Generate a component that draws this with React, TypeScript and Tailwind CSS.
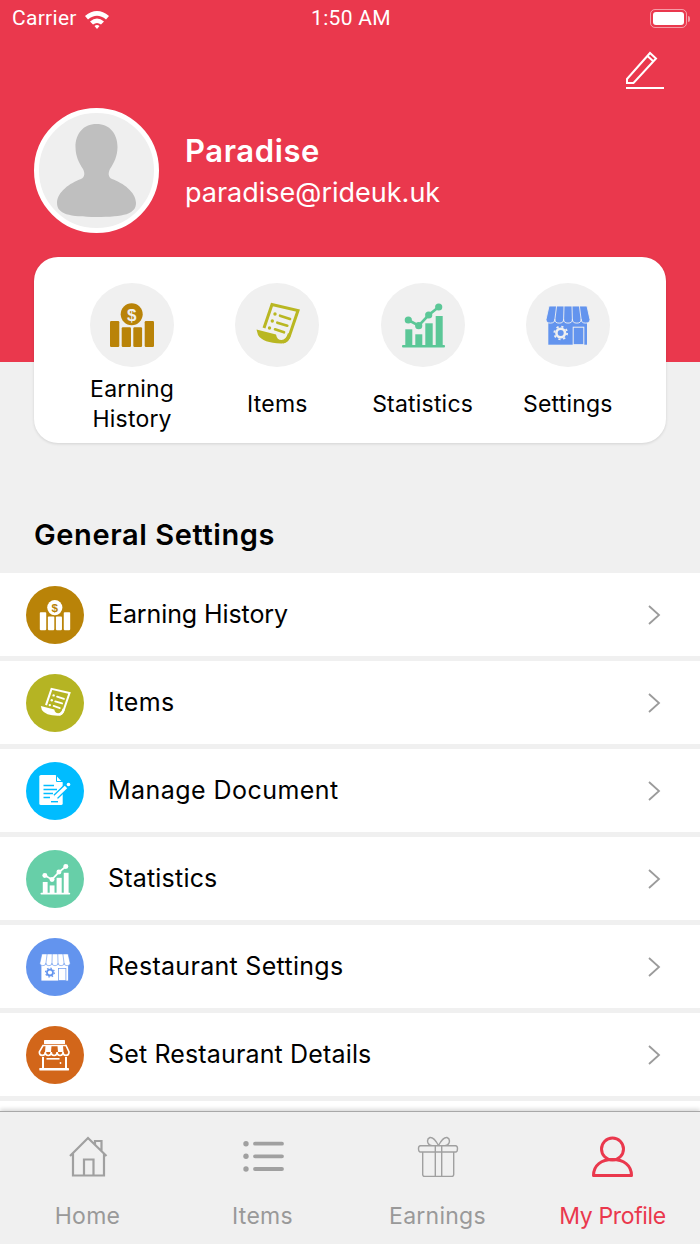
const FONT = "font-['Inter','Liberation_Sans',sans-serif]";

function EarningIcon({ fg, bg }: { fg: string; bg: string }) {
  return (
    <svg viewBox="0 0 84 84" className="w-full h-full">
      <rect x="20" y="38" width="9.3" height="26" rx="1.2" fill={fg} />
      <rect x="31.7" y="44.3" width="9.3" height="19.7" rx="1.2" fill={fg} />
      <rect x="43.3" y="44.3" width="8.8" height="19.7" rx="1.2" fill={fg} />
      <rect x="54.7" y="38" width="9.3" height="26" rx="1.2" fill={fg} />
      <circle cx="41.7" cy="31.3" r="11" fill={fg} />
      <text x="41.7" y="37.5" textAnchor="middle" fontSize="17" fontWeight="700" fontFamily="Liberation Sans, sans-serif" fill={bg}>
        $
      </text>
    </svg>
  );
}

function ItemsIcon({ fg }: { fg: string }) {
  return (
    <svg viewBox="0 0 84 84" className="w-full h-full">
      <path d="M29 45 L37 21.5 L63 27.5 L55 51 Q53 58 48 59" fill="none" stroke={fg} strokeWidth="3" />
      <path d="M21.5 46.5 L41 51.5 Q42 57 46.5 57 Q51 57 53 50 L56 52 Q53 61 46 60.5 Q28 60 23 52 Z" fill={fg} />
      <circle cx="40" cy="31" r="1.7" fill={fg} />
      <circle cx="37.3" cy="38" r="1.7" fill={fg} />
      <circle cx="34.5" cy="45" r="1.7" fill={fg} />
      <path d="M45 32.7 L55 36 M42.3 39.7 L52.3 42.7 M40 46.3 L49 49.3" stroke={fg} strokeWidth="2.6" strokeLinecap="round" />
    </svg>
  );
}

function StatsIcon({ fg }: { fg: string }) {
  return (
    <svg viewBox="0 0 84 84" className="w-full h-full">
      <rect x="21" y="62" width="43" height="2.4" rx="1" fill={fg} />
      <rect x="24.3" y="46.3" width="7" height="16" fill={fg} />
      <rect x="34.3" y="51.3" width="7" height="11" fill={fg} />
      <rect x="44.3" y="40.3" width="7.4" height="22" fill={fg} />
      <rect x="54.7" y="33" width="7" height="29.3" fill={fg} />
      <path d="M27.3 37 L37.7 42.7 L47.7 32 L57.7 24" fill="none" stroke={fg} strokeWidth="2.6" />
      <circle cx="27.3" cy="37" r="3.6" fill={fg} />
      <circle cx="37.7" cy="42.7" r="3.6" fill={fg} />
      <circle cx="47.7" cy="32" r="3.6" fill={fg} />
      <circle cx="57.7" cy="24" r="3.6" fill={fg} />
    </svg>
  );
}

function StoreIcon({ fg, bg }: { fg: string; bg: string }) {
  return (
    <svg viewBox="0 0 84 84" className="w-full h-full">
      <rect x="22.3" y="38" width="38.7" height="23.7" fill={fg} />
      <path
        d="M23 23 H61 L64 36.5 a4.4 3.6 0 0 1 -8.8 0 a4.4 3.6 0 0 1 -8.8 0 a4.4 3.6 0 0 1 -8.8 0 a4.4 3.6 0 0 1 -8.8 0 a4.4 3.6 0 0 1 -8.8 0 Z"
        fill={fg}
        stroke={bg}
        strokeWidth="0.9"
      />
      <path d="M30.6 23 L28.8 37 M38 23 L37.6 37 M46 23 L46.4 37 M53.4 23 L55.2 37" stroke={bg} strokeWidth="0.9" />
      <rect x="47.2" y="44.2" width="10.6" height="17.5" fill="none" stroke={bg} strokeWidth="1" />
      <circle cx="34.7" cy="50" r="5.6" fill={bg} />
      <circle cx="34.7" cy="50" r="6.4" fill="none" stroke={bg} strokeWidth="1.8" strokeDasharray="2.2 2.8" />
      <circle cx="34.7" cy="50" r="3" fill={fg} />
    </svg>
  );
}

function DocIcon() {
  return (
    <svg viewBox="0 0 58 58" className="w-full h-full">
      <path d="M15 13 H29.5 L36.7 20.5 V41.5 Q36.7 43 35 43 H15 Q13.3 43 13.3 41.5 V14.5 Q13.3 13 15 13 Z" fill="#fff" />
      <path d="M30.5 13.5 V19.5 H36.5" fill="none" stroke="#00bcff" strokeWidth="1" />
      <path d="M17.5 23.5 H28 M17.5 27.5 H31 M17.5 31.5 H27 M17.5 35.5 H24" stroke="#00bcff" strokeWidth="1.5" />
      <path d="M29.5 35 L41 24" stroke="#00bcff" strokeWidth="6" />
      <path d="M29.5 35 L40 25" stroke="#fff" strokeWidth="3.4" />
      <circle cx="42.5" cy="22.5" r="1.8" fill="#fff" />
      <path d="M28 38 L28.8 33.5 L32 36.5 Z" fill="#fff" />
      <rect x="25" y="39" width="7" height="1.4" fill="#00bcff" />
    </svg>
  );
}

function ShopIcon() {
  return (
    <svg viewBox="0 0 58 58" className="w-full h-full">
      <rect x="18" y="14" width="21" height="4" rx="0.6" fill="#fff" />
      <path d="M17 19.5 H40 L43 26 a3 3.4 0 0 1 -6 0 a2.9 3.4 0 0 1 -5.9 0 a2.9 3.4 0 0 1 -5.9 0 a2.9 3.4 0 0 1 -5.9 0 a3 3.4 0 0 1 -6 0 Z" fill="none" stroke="#fff" strokeWidth="1.6" />
      <path d="M19.5 20 L19 26 H25 L25.5 20 Z M31.5 20 L32 26 H37.5 L37 20 Z" fill="#fff" />
      <path d="M17 31 V42.5 M40 31 V42.5" stroke="#fff" strokeWidth="2" />
      <rect x="13.3" y="42" width="29.7" height="2.4" rx="0.4" fill="#fff" />
      <rect x="20.5" y="32" width="13" height="1.6" fill="#fff" />
      <circle cx="34.5" cy="37" r="0.9" fill="#fff" />
    </svg>
  );
}

function Chevron() {
  return (
    <svg viewBox="0 0 14 22" className="w-[14px] h-[22px]">
      <path d="M2 2 L12 11 L2 20" fill="none" stroke="#9b9b9b" strokeWidth="1.8" />
    </svg>
  );
}

const quickLinks = [
  { label: ["Earning", "History"], icon: <EarningIcon fg="#b98308" bg="#f0f0f0" /> },
  { label: ["Items"], icon: <ItemsIcon fg="#b9b722" /> },
  { label: ["Statistics"], icon: <StatsIcon fg="#5bc797" /> },
  { label: ["Settings"], icon: <StoreIcon fg="#6394ee" bg="#f0f0f0" /> },
];

const settings = [
  { label: "Earning History", track: "tracking-[-0.1px]", color: "bg-[#b98308]", icon: <EarningIcon fg="#fff" bg="#b98308" /> },
  { label: "Items", track: "tracking-[0.4px]", color: "bg-[#b5b423]", icon: <ItemsIcon fg="#fff" /> },
  { label: "Manage Document", track: "tracking-[0.45px]", color: "bg-[#00bcff]", icon: <DocIcon /> },
  { label: "Statistics", track: "tracking-[0.2px]", color: "bg-[#67cfa8]", icon: <StatsIcon fg="#fff" /> },
  { label: "Restaurant Settings", track: "tracking-[0.3px]", color: "bg-[#6394ee]", icon: <StoreIcon fg="#fff" bg="#6394ee" /> },
  { label: "Set Restaurant Details", track: "tracking-[0.15px]", color: "bg-[#d2661a]", icon: <ShopIcon /> },
];

export default function App() {
  return (
    <div className={`w-[700px] h-[1244px] flex flex-col overflow-hidden bg-[#f0f0f0] ${FONT}`}>
      <div className="flex-1 min-h-0 overflow-hidden">
        {/* Red header */}
        <div className="h-[362px] bg-[#ea384d] text-white">
          <div className="grid grid-cols-3 items-center h-[37px] pl-3 pr-[10px] font-['Roboto',sans-serif] text-[21px] tracking-[0.3px]">
            <div className="flex items-center gap-[7px]">
              <span>Carrier</span>
              <svg viewBox="0 0 26 20" className="w-[26px] h-[20px]">
                <path d="M1 7 Q13 -3 25 7 L22 10.5 Q13 3 4 10.5 Z" fill="#fff" />
                <path d="M6 12.5 Q13 6.5 20 12.5 L17 15.5 Q13 12.5 9 15.5 Z" fill="#fff" />
                <path d="M10.5 17 Q13 15 15.5 17 L13 20 Z" fill="#fff" />
              </svg>
            </div>
            <div className="text-center">1:50 AM</div>
            <div className="flex justify-end">
              <div className="flex items-center">
                <div className="w-[37px] h-[19px] rounded-[5px] border border-white/50 p-[2px]">
                  <div className="w-full h-full rounded-[3px] bg-white" />
                </div>
                <div className="w-[2px] h-[6px] bg-white/50 rounded-r-sm ml-[1px]" />
              </div>
            </div>
          </div>

          <div className="flex justify-end pr-[35px] pt-[13px]">
            <svg viewBox="0 0 40 40" className="w-[40px] h-[40px]">
              <path d="M2 29 L25 3 L31 8.5 L8.5 33 H2 Z M22.5 6 L28.5 11.5" fill="none" stroke="#fff" strokeWidth="2" />
              <rect x="1" y="37" width="38" height="2" fill="#fff" />
            </svg>
          </div>

          <div className="flex items-center gap-[26px] pl-[34px] mt-[18px]">
            <div className="w-[125px] h-[125px] rounded-full border-[5px] border-white bg-[#efefef] overflow-hidden">
              <svg viewBox="5 5 115 115" className="w-full h-full">
                <path
                  d="M62.5 16 C49 16 41.5 26 41.5 39 C41.5 48 45 55 49 61 C51 65 51 69 47 71 C36 75 23 84 23 95 C23 106 35 109 62.5 109 C90 109 102 106 102 95 C102 84 89 75 78 71 C74 69 74 65 76 61 C80 55 83.5 48 83.5 39 C83.5 26 76 16 62.5 16 Z"
                  fill="#bfbfbf"
                />
              </svg>
            </div>
            <div className="pt-[3px]">
              <p className="text-[31px] leading-[42px] font-semibold tracking-[0.6px]">Paradise</p>
              <p className="text-[27px] leading-[42px]">paradise@rideuk.uk</p>
            </div>
          </div>
        </div>

        {/* Quick links card */}
        <div className="relative -mt-[105px] mx-[34px] h-[186px] rounded-[24px] bg-white shadow-[0_1px_3px_rgba(0,0,0,0.12)] px-[25.5px] pt-[26px] grid grid-cols-4">
          {quickLinks.map((link) => (
            <div key={link.label[0]} className="flex flex-col items-center">
              <div className="w-[84px] h-[84px] rounded-full bg-[#f0f0f0]">{link.icon}</div>
              <div className="h-[74px] flex flex-col justify-center text-[23px] leading-[30px] tracking-[0.2px] text-center text-black">
                {link.label.map((line) => (
                  <span key={line}>{line}</span>
                ))}
              </div>
            </div>
          ))}
        </div>

        <h2 className="mt-[72px] h-[58px] pl-[34px] text-[29px] leading-[40px] font-semibold tracking-[0.6px] text-black">General Settings</h2>

        {/* Settings rows */}
        <div className="flex flex-col gap-[5px]">
          {settings.map((row) => (
            <div key={row.label} className="h-[83px] shrink-0 bg-white flex items-center pl-[26px] pr-[39px]">
              <div className={`w-[58px] h-[58px] rounded-full ${row.color}`}>{row.icon}</div>
              <span className={`ml-[24px] flex-1 text-[25px] text-black ${row.track}`}>{row.label}</span>
              <Chevron />
            </div>
          ))}
          <div className="h-[83px] shrink-0 bg-white" />
        </div>
      </div>

      {/* Bottom tabs */}
      <div className="relative h-[133px] shrink-0 bg-[#f0f0f0] border-t border-[#a8a8a8] shadow-[0_-2px_4px_rgba(0,0,0,0.15)] grid grid-cols-4 text-[#999999] text-[23px] tracking-[0.25px]">
        <div className="flex flex-col items-center pt-[23px]">
          <svg viewBox="0 0 42 42" className="w-[42px] h-[42px]">
            <path d="M3 21 L21 3 L39.5 21 M6 18.5 V40.5 H37 V18.5 M17 40.5 V24.5 H26.5 V40.5 M28 9.5 V6 H34.5 V15.5" fill="none" stroke="#a0a0a0" strokeWidth="2.2" />
          </svg>
          <span className="mt-[22px]">Home</span>
        </div>
        <div className="flex flex-col items-center pt-[23px]">
          <svg viewBox="0 0 42 42" className="w-[42px] h-[42px]">
            <circle cx="4" cy="8.7" r="2.7" fill="#a0a0a0" />
            <circle cx="4" cy="21.3" r="2.7" fill="#a0a0a0" />
            <circle cx="4" cy="34" r="2.7" fill="#a0a0a0" />
            <path d="M13 8.7 H40 M13 21.3 H40 M13 34 H40" stroke="#a0a0a0" strokeWidth="3.8" strokeLinecap="round" />
          </svg>
          <span className="mt-[22px]">Items</span>
        </div>
        <div className="flex flex-col items-center pt-[23px]">
          <svg viewBox="0 0 42 42" className="w-[42px] h-[42px]">
            <path d="M3.5 10.7 H38.5 Q40.5 10.7 40.5 13.5 Q40.5 17 38.5 17 H3.5 Q1.5 17 1.5 13.5 Q1.5 10.7 3.5 10.7 Z M5.7 17 V39.5 Q5.7 41.5 7.7 41.5 H34.7 Q36.7 41.5 36.7 39.5 V17 M18.3 10.7 V41.5 M24.7 10.7 V41.5 M21.5 10.5 Q17 2 13 2.5 Q9.5 4 11 8 Q12 10.5 15 10.7 M21.5 10.5 Q26 2 30 2.5 Q33.5 4 32 8 Q31 10.5 28 10.7" fill="none" stroke="#a0a0a0" strokeWidth="1.4" />
          </svg>
          <span className="mt-[22px]">Earnings</span>
        </div>
        <div className="flex flex-col items-center pt-[23px] text-[#ea384d]">
          <svg viewBox="0 0 42 42" className="w-[42px] h-[42px]">
            <circle cx="20.5" cy="14" r="11" fill="none" stroke="#ea384d" strokeWidth="3" />
            <path d="M1.5 40.5 C1.5 30 9.5 24.5 20.5 24.5 C31.5 24.5 39.5 30 39.5 40.5 Z" fill="none" stroke="#ea384d" strokeWidth="3" strokeLinejoin="round" />
          </svg>
          <span className="mt-[22px] tracking-[-0.35px]">My Profile</span>
        </div>
      </div>
    </div>
  );
}
